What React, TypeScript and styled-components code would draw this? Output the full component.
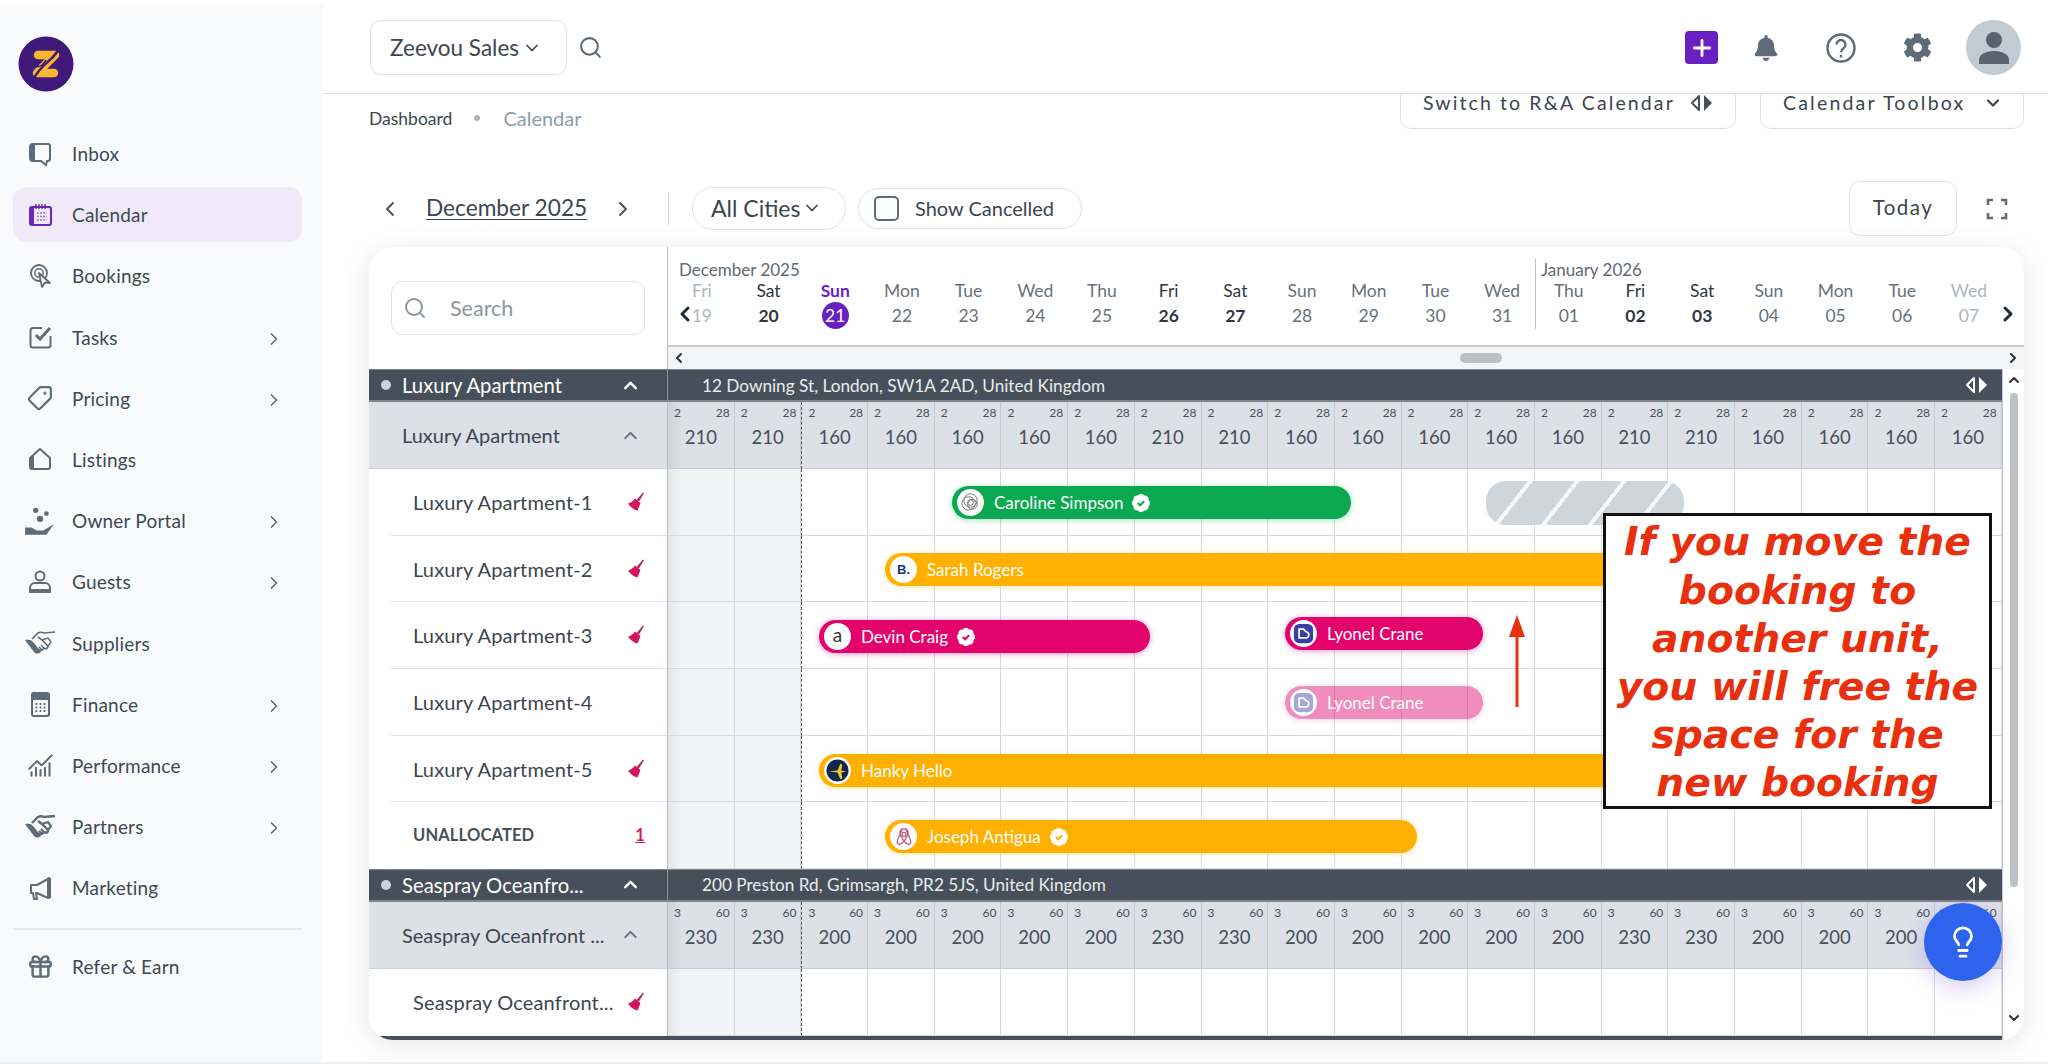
import React from 'react';
import styled, { createGlobalStyle } from 'styled-components';
import { Search, ChevronDown, ChevronUp, ChevronLeft, ChevronRight, Tag, ChartNoAxesCombined, Gift, Plus, Lightbulb } from 'lucide-react';
import { FaBell, FaCog } from 'react-icons/fa';

const FONT = `Lato, "Noto Sans", sans-serif`;
const COL = 1334 / 20;

const Global = createGlobalStyle`
  html, body { margin: 0; padding: 0; background: #fff; }
  body { font-family: ${FONT}; color: #3c4650; }
  * { box-sizing: border-box; }
`;

const Page = styled.div`
  width: 2048px; height: 1064px; display: flex; overflow: hidden; background: #fff;
  border-bottom: 2px solid #eceef0;
`;
const Sidebar = styled.aside`
  width: 323px; flex: none; margin-top: 4px; background: #f9fafb; padding: 32px 21px 0 13px;
  display: flex; flex-direction: column;
`;
const LogoWrap = styled.div`
  width: 56px; height: 56px; margin-left: 5px; margin-bottom: 34px;
`;
const NavList = styled.nav`
  display: flex; flex-direction: column;
`;
const NavItem = styled.div<{ $active?: boolean }>`
  height: 55px; margin-bottom: 6.2px; border-radius: 13px; display: flex; align-items: center;
  padding-left: 10px; padding-right: 18px; font-size: 19px; letter-spacing: .2px; color: #3f4954;
  background: ${p => (p.$active ? '#efe9f8' : 'transparent')};
`;
const NavIcon = styled.span<{ $active?: boolean }>`
  width: 34px; height: 34px; margin-right: 15px; display: flex; align-items: center; justify-content: center;
  color: ${p => (p.$active ? '#6a27b8' : '#5f6b76')};
`;
const NavLabel = styled.span`
  flex: 1;
`;
const NavChevron = styled.span`
  display: flex; color: #5f6b76; margin-top: 3px;
`;
const NavDivider = styled.div`
  height: 2px; background: #e7e9ec; margin: 7px 0 9px;
`;

const Main = styled.div`
  flex: 1; min-width: 0; display: flex; flex-direction: column;
`;
const TopBar = styled.header`
  height: 94px; flex: none; background: #fff; border-bottom: 1px solid #dfe2e5; position: relative; z-index: 3;
  display: flex; align-items: center; padding: 2px 27px 0 47px;
`;
const AccountSelect = styled.div`
  width: 197px; height: 55px; border: 1px solid #dfe3e7; border-radius: 11px; display: flex; align-items: center;
  padding-left: 19px; gap: 3px; font-size: 22.5px; color: #3c4650;
`;
const TopSearch = styled.span`
  display: flex; color: #5f6b76; margin-left: 11px;
`;
const TopRight = styled.div`
  margin-left: auto; display: flex; align-items: center;
`;
const PlusBtn = styled.div`
  width: 33px; height: 33px; border-radius: 4px; background: #6a1fc4; color: #fff; display: flex;
  align-items: center; justify-content: center; margin-right: 26px;
`;
const TopIcon = styled.span`
  width: 44px; display: flex; justify-content: center; color: #5f6b76; margin-right: 31px;
  &:nth-child(3) { margin-right: 32px; }
  &:nth-child(4) { margin-right: 27px; }
`;
const Avatar = styled.div`
  width: 55px; height: 55px; border-radius: 50%; background: #c2cad2; display: flex; align-items: center; justify-content: center;
`;

const Content = styled.main`
  flex: 1; min-height: 0; overflow: hidden; padding: 0 24px 0 46px; display: flex; flex-direction: column;
`;
const CrumbRow = styled.div`
  display: flex; align-items: flex-start; margin-top: -20px; height: 55px; flex: none;
`;
const Crumbs = styled.div`
  display: flex; align-items: center; margin-top: 32px; margin-right: auto; font-size: 17.5px; color: #3c4650;
`;
const CrumbDot = styled.span`
  width: 6px; height: 6px; border-radius: 50%; background: #a9b2bb; margin: 0 23px 0 22px;
`;
const CrumbMuted = styled.span`
  font-size: 20px; color: #929ca6;
`;
const TopAction = styled.div<{ $w: number; $track: number }>`
  width: ${p => p.$w}px; height: 55px; border: 1px solid #dfe3e7; border-radius: 11px; display: flex; align-items: center;
  justify-content: space-between; padding: 2px 20px 0 22px; font-size: 19.5px; line-height: 16px; letter-spacing: ${p => p.$track}px; color: #3c4650;
  margin-left: 24px;
`;
const Toolbar = styled.div`
  display: flex; align-items: center; height: 55px; flex: none; margin-top: 52px; padding-bottom: 0;
`;
const Arrow = styled.span`
  display: flex; color: #4a5560;
`;
const MonthLink = styled.span`
  font-size: 22.7px; color: #3c4650; text-decoration: underline; text-underline-offset: 3px; margin: 0 24px 2px 24px; width: 161px; text-decoration-thickness: 1px; white-space: nowrap;
`;
const VRule = styled.div`
  width: 1px; height: 33px; background: #cfd4d9; margin: 0 23px 0 33px;
`;
const Pill = styled.div<{ $w: number }>`
  height: 41px; width: ${p => p.$w}px; border: 1px solid #dfe3e7; border-radius: 21px; display: flex; align-items: center;
`;
const CityPill = styled(Pill)`
  padding: 0 0 2px 18px; gap: 2px; font-size: 23px; margin-right: 12px; height: 43px;
`;
const CancelPill = styled(Pill)`
  padding: 0 0 1px 15px; font-size: 20px;
`;
const Checkbox = styled.span`
  width: 25px; height: 25px; border: 2.5px solid #5f6b76; border-radius: 5px; margin-right: 16px;
`;
const TodayBtn = styled.div`
  margin-left: auto; width: 108px; height: 55px; border: 1px solid #dfe3e7; border-radius: 11px; display: flex;
  align-items: center; justify-content: center; font-size: 20.5px; letter-spacing: 1.5px; padding-bottom: 3px;
`;
const Expand = styled.span`
  display: flex; margin-left: 29px; margin-right: 16px; color: #5f6b76;
`;

const Card = styled.section`
  margin-top: 11px; height: 793px; flex: none; background: #fff; border-radius: 24px; overflow: hidden; position: relative;
  box-shadow: 0 4px 26px rgba(70, 80, 95, .14);
`;
const CardHead = styled.div`
  display: flex; height: 122px; position: relative;
`;
const HeadLeft = styled.div`
  width: 299px; flex: none; padding: 34px 0 0 22px; border-right: 1px solid #b9bec5;
`;
const SearchBox = styled.div`
  width: 254px; height: 54px; border: 1px solid #dfe3e7; border-radius: 11px; display: flex; align-items: center;
  padding-left: 11px; font-size: 21.5px; color: #8c96a0; gap: 23px;
`;
const HeadRight = styled.div`
  flex: 1; display: flex; flex-direction: column;
`;
const HeadDates = styled.div`
  height: 100px; padding-top: 12px; border-bottom: 2px solid #c8ccd1;
`;
const Grid20 = styled.div`
  display: grid; grid-template-columns: repeat(20, ${COL}px);
`;
const MonthLabel = styled.div<{ $from: number; $to: number; $rule?: boolean }>`
  grid-column: ${p => p.$from} / ${p => p.$to}; height: 21px; font-size: 17px; line-height: 21px; color: #5f6b76;
  padding-left: ${p => (p.$rule ? 5 : 11)}px;
  border-left: ${p => (p.$rule ? '1px solid #b9bec5' : 'none')};
`;
const DayCol = styled.div<{ $rule?: boolean }>`
  height: 49px; text-align: center; display: flex; flex-direction: column; align-items: center;
  border-left: ${p => (p.$rule ? '1px solid #b9bec5' : '1px solid transparent')};
`;
const DayName = styled.div<{ $tone: string }>`
  font-size: 17.5px; line-height: 22px;
  color: ${p => (p.$tone === 'today' ? '#6a1fc4' : p.$tone === 'bold' ? '#2f3842' : p.$tone === 'past' ? '#aeb6bd' : '#66717c')};
  font-weight: ${p => (p.$tone === 'today' ? 700 : 400)};
`;
const DayNum = styled.div<{ $tone: string }>`
  font-size: 17.5px; line-height: 27px; width: 27px; height: 27px; border-radius: 50%;
  color: ${p => (p.$tone === 'today' ? '#fff' : p.$tone === 'bold' ? '#2f3842' : p.$tone === 'past' ? '#aeb6bd' : '#66717c')};
  background: ${p => (p.$tone === 'today' ? '#6a1fc4' : 'transparent')};
  font-weight: ${p => (p.$tone === 'bold' ? 700 : 400)};
`;
const HeadNav = styled.span<{ $side: 'left' | 'right' }>`
  position: absolute; top: 55px; ${p => (p.$side === 'left' ? 'left: 304px;' : 'right: 4px;')} display: flex; color: #222a33;
`;
const HScroll = styled.div`
  height: 22px; background: #f4f5f7; display: flex; align-items: center; padding: 0 3px 0 3px; color: #333;
`;
const HThumb = styled.div`
  width: 42px; height: 10px; border-radius: 5px; background: #bdbfc2; margin-left: 773px; margin-right: auto;
`;
const Body = styled.div`
  display: flex; height: 671px; position: relative;
`;
const Rows = styled.div`
  flex: 1; display: flex; flex-direction: column;
`;
const VScroll = styled.div`
  width: 22px; flex: none; border-left: 1px solid #c4c8cd; display: flex; flex-direction: column; align-items: center; color: #333; background: #fff;
`;
const VThumb = styled.div`
  width: 8px; height: 494px; background: #bdbfc2; border-radius: 4px; margin: 5px 0 123px;
`;
const Row = styled.div<{ $h: number }>`
  display: flex; height: ${p => p.$h}px; flex: none;
`;
const DarkLeft = styled.div`
  width: 299px; flex: none; background: #47505a; color: #fff; border-right: 1px solid #8c939a; display: flex; align-items: center;
  padding-left: 12px; font-size: 20.3px; border-top: 1px solid #7f868d; border-bottom: 2px solid #7f868d;
`;
const DarkDot = styled.span`
  width: 10px; height: 10px; border-radius: 50%; background: #ccd2d8; margin-right: 11px; flex: none;
`;
const DarkName = styled.span`
  flex: 1; white-space: nowrap;
`;
const ChevronSlot = styled.span<{ $color: string }>`
  display: flex; width: 24px; justify-content: center; margin-right: 25px; color: ${p => p.$color};
`;
const DarkRight = styled.div`
  flex: 1; background: #47505a; color: #e9ecef; display: flex; align-items: center; justify-content: space-between;
  padding: 0 12px 0 34px; font-size: 17.2px; border-top: 1px solid #7f868d; border-bottom: 2px solid #7f868d;
`;
const SubLeft = styled.div`
  width: 299px; flex: none; background: #dde1e7; border-right: 1px solid #b9bec5; display: flex; align-items: center;
  padding-left: 33px; font-size: 20px; color: #3c4650; border-bottom: 1px solid #cfd3d8;
`;
const SubName = styled.span`
  flex: 1; white-space: nowrap;
`;
const PriceCell = styled.div<{ $today?: boolean; $first?: boolean }>`
  position: relative; background: #dde1e7; border-right: 1px solid #c6cbd1; border-bottom: 1px solid #c6cbd1; text-align: center;
  border-left: ${p => (p.$today ? '1px dashed #555' : 'none')};
  ${p => (p.$first ? 'background: linear-gradient(90deg, #cfd3d9, #dde1e7 14px);' : '')}
`;
const PriceMin = styled.div`
  display: flex; justify-content: space-between; padding: 3px 4px 0 6px; font-size: 12px; line-height: 15px; color: #47505a;
`;
const PriceVal = styled.div`
  font-size: 18.5px; line-height: 24px; margin-top: 5px; color: #47505a;
`;
const UnitLeft = styled.div`
  width: 299px; flex: none; border-right: 1px solid #b9bec5; padding-left: 22px; background: #fff; display: flex;
`;
const UnitInner = styled.div<{ $last?: boolean }>`
  flex: 1; display: flex; align-items: center; padding-left: 22px; padding-right: 22px; font-size: 20px; letter-spacing: .15px; color: #3c4650;
  border-bottom: 1px solid ${p => (p.$last ? 'transparent' : '#dfe2e5')};
`;
const UnitName = styled.span`
  flex: 1; white-space: nowrap;
`;
const Unallocated = styled.span`
  flex: 1; font-size: 16.5px; font-weight: 700; color: #47505a;
`;
const UnallocatedCount = styled.span`
  color: #d81b60; font-size: 16.5px; text-decoration: underline; font-weight: 700;
`;
const BroomSlot = styled.span`
  display: flex;
`;
const Timeline = styled.div`
  flex: 1; position: relative; display: grid; grid-template-columns: repeat(20, ${COL}px);
`;
const Cell = styled.div<{ $past?: boolean; $today?: boolean; $first?: boolean }>`
  border-right: 1px solid #d6dade; border-bottom: 1px solid #d6dade;
  background: ${p => (p.$first ? 'linear-gradient(90deg, #e4e6ea, #f3f4f6 14px)' : p.$past ? '#f3f4f6' : '#fff')};
  border-left: ${p => (p.$today ? '1px dashed #555' : 'none')};
`;
const Bar = styled.div<{ $color: string; $glow: string; $faded?: boolean }>`
  position: absolute; height: 33px; border-radius: 17px; background: ${p => p.$color}; display: flex; align-items: center;
  padding-left: 5px; color: #fff; font-size: 17px; white-space: nowrap; box-shadow: 0 1px 6px ${p => p.$glow};
  opacity: ${p => (p.$faded ? 0.45 : 1)};
`;
const BarLogo = styled.span`
  width: 27px; height: 27px; border-radius: 50%; background: #fff; display: flex; align-items: center; justify-content: center;
  margin-right: 10px; flex: none; overflow: hidden;
`;
const BLetter = styled.span`
  font-family: "Liberation Sans", sans-serif; font-size: 13px; font-weight: 700; color: #123a75;
`;
const ALetter = styled.span`
  font-size: 19px; color: #333; line-height: 20px; margin-top: -4px;
`;
const BarBadge = styled.span`
  display: flex; margin-left: 7px;
`;
const Striped = styled.div`
  position: absolute; height: 44px; border-radius: 20px;
  background: repeating-linear-gradient(128deg, #ced5db 0 33px, #f6f7f8 33px 37px);
`;
const BottomStrip = styled.div`
  height: 4px; flex: none; background: #47505a;
`;
const UpArrowWrap = styled.div`
  position: absolute; left: 1140px; top: 246px; display: flex; z-index: 2;
`;
const Note = styled.div`
  position: absolute; left: 1234px; top: 144px; width: 389px; height: 296px; background: #fff; border: 3px solid #111; z-index: 2;
  display: flex; align-items: center; justify-content: center; text-align: center; padding-top: 4px;
  font-family: "DejaVu Sans", sans-serif; font-weight: 700; font-style: italic; font-size: 39.3px; line-height: 48.2px; color: #e8300f;
`;
const Fab = styled.div`
  position: absolute; left: 1555px; top: 534px; width: 78px; height: 78px; border-radius: 50%; background: #2d63ed; color: #fff; z-index: 4;
  display: flex; align-items: center; justify-content: center; box-shadow: 0 6px 24px rgba(120, 80, 230, .3);
`;

const G = '#5f6b76';
const Ico = { width: 30, height: 30, viewBox: '0 0 30 30', fill: 'none' } as const;
const InboxIcon = () => (
  <svg {...Ico}><path d="M8 5h15a2 2 0 0 1 2 2v13a2 2 0 0 1-2 2h-1l-1 4-5-4H8a3 3 0 0 1-3-3V8a3 3 0 0 1 3-3z" stroke={G} strokeWidth="2" /><path d="M5 8a3 3 0 0 1 3-3h2v17H8a3 3 0 0 1-3-3z" fill={G} /></svg>
);
const CalendarIcon = () => (
  <svg {...Ico}><rect x="5" y="7" width="21" height="18" rx="2" stroke="#6a27b8" strokeWidth="2" /><path d="M5 9a2 2 0 0 1 2-2h2v18H7a2 2 0 0 1-2-2z" fill="#6a27b8" /><path d="M11 4v5M14 4v5M17 4v5M20 4v5M9 7h16" stroke="#6a27b8" strokeWidth="1.4" /><path d="M12 13h10M12 16.5h10M12 20h10" stroke="#8d63c9" strokeWidth="1.6" strokeDasharray="1.6 1.6" /></svg>
);
const BookingsIcon = () => (
  <svg {...Ico}><circle cx="14" cy="12" r="8" stroke={G} strokeWidth="1.8" /><circle cx="14" cy="12" r="4.2" stroke={G} strokeWidth="1.5" /><path d="M14 12l3 14 3-4.500 5 .5z" fill="#f9fafb" stroke={G} strokeWidth="1.8" strokeLinejoin="round" /></svg>
);
const TasksIcon = () => (
  <svg {...Ico}><path d="M17 6H8a2.500 2.500 0 0 0-2.500 2.500V23A2.500 2.500 0 0 0 8 25.500h15a2.500 2.500 0 0 0 2.500-2.500v-9" stroke={G} strokeWidth="2" /><path d="M11 13l4 4 10-11" stroke={G} strokeWidth="3" /></svg>
);
const ListingsIcon = () => (
  <svg {...Ico}><path d="M15 5L5 14v9a2 2 0 0 0 2 2h16a2 2 0 0 0 2-2v-9z" stroke={G} strokeWidth="2" strokeLinejoin="round" /><path d="M5 14v9a2 2 0 0 0 2 2h2V11z" fill={G} /></svg>
);
const OwnerIcon = () => (
  <svg {...Ico} width={32} height={32}><circle cx="11" cy="5" r="2.500" fill={G} /><circle cx="21" cy="8" r="2.200" fill={G} /><circle cx="15" cy="13" r="3" fill={G} /><path d="M1 21h6l5 3h6l10-6-7 10H1z" fill={G} /></svg>
);
const GuestsIcon = () => (
  <svg {...Ico}><circle cx="15" cy="9" r="4.500" stroke={G} strokeWidth="2" /><path d="M5 25v-4a5 5 0 0 1 5-5h10a5 5 0 0 1 5 5v4z" stroke={G} strokeWidth="2" /><path d="M5 25v-3h20v3z" fill={G} /></svg>
);
const ShakeIcon = ({ heavy }: { heavy?: boolean }) => (
  <svg width="32" height="28" viewBox="0 0 32 28" fill="none">
    <path d="M1 11c4-1 7 0 9 3l7 9c-3 2-5 2-7 0z" fill={G} />
    <path d="M8 10l6-6c2-1 4-1 6 0l11-1" stroke={G} strokeWidth={heavy ? 2.4 : 1.6} />
    <path d="M14 8l4 3 5 5c2 2 0 5-3 3l-2 2c-2 1-3 0-4-1" stroke={G} strokeWidth={heavy ? 2.4 : 1.6} />
    <path d="M18 11l6-2 3 4-3 4M20 19l-3-3M18 21l-3-3" stroke={G} strokeWidth={heavy ? 2.2 : 1.4} />
  </svg>
);
const FinanceIcon = () => (
  <svg {...Ico}><rect x="7" y="4" width="17" height="23" rx="2" stroke={G} strokeWidth="2" /><path d="M7 6a2 2 0 0 1 2-2h13a2 2 0 0 1 2 2v5H7z" fill={G} /><path d="M10.500 15h10M10.500 18.500h10M10.500 22h10" stroke={G} strokeWidth="1.800" strokeDasharray="1.800 2.300" /></svg>
);
const MarketingIcon = () => (
  <svg {...Ico}><path d="M23 6L12 12H6v8h2l1 6h3l-1-6h1l11 5" stroke={G} strokeWidth="2" strokeLinejoin="round" /><path d="M22 6a2 2 0 0 1 2-2 2 2 0 0 1 2 2v18a2 2 0 0 1-2 2 2 2 0 0 1-2-2z" fill={G} /></svg>
);
const LogoIcon = () => (
  <svg width="56" height="56" viewBox="0 0 56 56" fill="none"><circle cx="28" cy="28" r="27.500" fill="#3f1a78" /><path d="M20 19H37L19 37H36" stroke="#f9b62e" strokeWidth="8.500" strokeLinejoin="round" strokeLinecap="round" /><path d="M41 12C37 24 24 26 15 44" stroke="#3f1a78" strokeWidth="2.400" /><path d="M16 30c6 2 10-2 12-6" stroke="#3f1a78" strokeWidth="1.600" /></svg>
);
const BroomIcon = () => (
  <svg width="20" height="22" viewBox="0 0 20 22"><path d="M11.500 9L18 1.500l1 .8L14 10.500z" fill="#a8305f" /><path d="M10 7.500l5.500 4.500-3 7.500c-3-.5-7-3-9.500-7 2-.2 5-2 7-5z" fill="#d5145f" /></svg>
);
const DoubleTri = ({ color }: { color: string }) => (
  <svg width="26" height="18" viewBox="0 0 26 18"><path d="M10 2L3 9l7 7z" fill="none" stroke={color} strokeWidth="2" strokeLinejoin="round" /><path d="M15 1l8 8-8 8z" fill={color} /></svg>
);
const VerifiedBadge = ({ color }: { color: string }) => (
  <svg width="22" height="22" viewBox="0 0 24 24"><path d="M3.850 8.620a4 4 0 0 1 4.780-4.770 4 4 0 0 1 6.740 0 4 4 0 0 1 4.780 4.780 4 4 0 0 1 0 6.740 4 4 0 0 1-4.770 4.780 4 4 0 0 1-6.750 0 4 4 0 0 1-4.780-4.770 4 4 0 0 1 0-6.760Z" fill="#fff" /><path d="m8.500 12 2.500 2.500 4.500-4.500" stroke={color} strokeWidth="2.200" fill="none" /></svg>
);
const RingsLogo = () => (
  <svg width="23" height="23" viewBox="0 0 24 24" fill="none" stroke="#777" strokeWidth="1"><circle cx="12" cy="10" r="7" /><circle cx="10" cy="13" r="7" /><circle cx="14" cy="14" r="5" /><circle cx="12" cy="12" r="3" /></svg>
);
const PlaneLogo = () => (
  <svg width="23" height="23" viewBox="0 0 24 24"><circle cx="12" cy="12" r="11.500" fill="#10294a" /><path d="M3 13l9-1 3-7 2 1-1 6 5 1-5 1 1 6-2 1-3-7z" fill="#f5c33b" /></svg>
);
const AirLogo = () => (
  <svg width="20" height="22" viewBox="0 0 24 24" fill="none" stroke="#c0577a" strokeWidth="1.500"><path d="M12 17c-3-4-5-8-5-10a5 5 0 0 1 10 0c0 2-2 6-5 10zM12 17c3 4 7 5 8 2s-3-10-6-16M12 17c-3 4-7 5-8 2s3-10 6-16" /><circle cx="12" cy="9" r="2.500" /></svg>
);
const LodgeLogo = () => (
  <svg width="21" height="21" viewBox="0 0 24 24"><rect x="1" y="1" width="22" height="22" rx="6" fill="#3a3fa8" /><path d="M7 7v10h7a3.500 3.500 0 0 0 1-7l-3-3z" fill="none" stroke="#fff" strokeWidth="2" /></svg>
);
const ExpandIcon = () => (
  <svg width="22" height="22" viewBox="0 0 22 22" fill="none" stroke="#5f6b76" strokeWidth="2.600"><path d="M2 7V2h5M15 2h5v5M20 15v5h-5M7 20H2v-5" /></svg>
);
const PersonIcon = () => (
  <svg width="34" height="36" viewBox="0 0 34 36" fill="#58636e"><circle cx="17" cy="10" r="8" /><path d="M2 34v-4c0-6 8-9 15-9s15 3 15 9v4z" /></svg>
);
const HelpIcon = () => (
  <svg width="32" height="32" viewBox="0 0 32 32" fill="none" stroke="#5f6b76" strokeWidth="2.400"><circle cx="16" cy="16" r="13.500" /><path d="M11.500 12.500a4.500 4.500 0 1 1 7 3.800c-1.700 1.100-2.500 1.900-2.500 4" /><path d="M16 23v2.500" /></svg>
);
const RedArrow = () => (
  <svg width="16" height="92" viewBox="0 0 16 92"><path d="M8 0l8 22H9.500v70h-3V22H0z" fill="#e8300f" /></svg>
);

const nav: { label: string; icon: React.ReactNode; more?: boolean; active?: boolean }[] = [
  { label: 'Inbox', icon: <InboxIcon /> },
  { label: 'Calendar', icon: <CalendarIcon />, active: true },
  { label: 'Bookings', icon: <BookingsIcon /> },
  { label: 'Tasks', icon: <TasksIcon />, more: true },
  { label: 'Pricing', icon: <Tag size={26} strokeWidth={2} style={{ transform: 'scaleX(-1)' }} />, more: true },
  { label: 'Listings', icon: <ListingsIcon /> },
  { label: 'Owner Portal', icon: <OwnerIcon />, more: true },
  { label: 'Guests', icon: <GuestsIcon />, more: true },
  { label: 'Suppliers', icon: <ShakeIcon /> },
  { label: 'Finance', icon: <FinanceIcon />, more: true },
  { label: 'Performance', icon: <ChartNoAxesCombined size={27} strokeWidth={1.8} />, more: true },
  { label: 'Partners', icon: <ShakeIcon heavy />, more: true },
  { label: 'Marketing', icon: <MarketingIcon /> },
];

const names = ['Fri','Sat','Sun','Mon','Tue','Wed','Thu','Fri','Sat','Sun','Mon','Tue','Wed','Thu','Fri','Sat','Sun','Mon','Tue','Wed'];
const nums = ['19','20','21','22','23','24','25','26','27','28','29','30','31','01','02','03','04','05','06','07'];
const high = new Set([0, 1, 7, 8, 14, 15]);
const bold = new Set([1, 7, 8, 14, 15]);
const tone = (i: number) => (i === 2 ? 'today' : i === 0 || i === 19 ? 'past' : bold.has(i) ? 'bold' : 'norm');
const idx = Array.from({ length: 20 }, (_, i) => i);

const Prices = ({ lo, max, hi, reg }: { lo: string; max: string; hi: number; reg: number }) => (
  <Timeline>
    {idx.map(i => (
      <PriceCell key={i} $today={i === 2} $first={i === 0}>
        <PriceMin><span>{lo}</span><span>{max}</span></PriceMin>
        <PriceVal>{high.has(i) ? hi : reg}</PriceVal>
      </PriceCell>
    ))}
  </Timeline>
);
const Cells = () => (
  <>{idx.map(i => <Cell key={i} $past={i < 2} $first={i === 0} $today={i === 2} />)}</>
);

const C = { green: ['#0aa84f', 'rgba(10,168,79,.35)'], amber: ['#ffb000', 'rgba(255,176,0,.3)'], pink: ['#e2046c', 'rgba(226,4,108,.4)'] };

const units = [
  { name: 'Luxury Apartment-1', broom: true },
  { name: 'Luxury Apartment-2', broom: true },
  { name: 'Luxury Apartment-3', broom: true },
  { name: 'Luxury Apartment-4' },
  { name: 'Luxury Apartment-5', broom: true },
];

const B = ({ left, width, top = 17, color, logo, name, badge, faded }: { left: number; width: number; top?: number; color: string[]; logo: React.ReactNode; name: string; badge?: boolean; faded?: boolean }) => (
  <Bar $color={color[0]} $glow={color[1]} $faded={faded} style={{ left, width, top }}>
    <BarLogo>{logo}</BarLogo>
    {name}
    {badge && <BarBadge><VerifiedBadge color={color[0]} /></BarBadge>}
  </Bar>
);

const overlays: React.ReactNode[] = [
  <>
    <B left={284} width={399} color={C.green} logo={<RingsLogo />} name="Caroline Simpson" badge />
    <Striped style={{ left: 818, width: 198, top: 12 }} />
  </>,
  <B left={217} width={800} color={C.amber} logo={<BLetter>B.</BLetter>} name="Sarah Rogers" />,
  <>
    <B left={151} width={331} top={18} color={C.pink} logo={<ALetter>a</ALetter>} name="Devin Craig" badge />
    <B left={617} width={198} top={15} color={C.pink} logo={<LodgeLogo />} name="Lyonel Crane" />
  </>,
  <B left={617} width={198} top={17} color={C.pink} logo={<LodgeLogo />} name="Lyonel Crane" faded />,
  <B left={151} width={860} top={18} color={C.amber} logo={<PlaneLogo />} name="Hanky Hello" />,
];

export default function App() {
  return (
    <Page>
      <Global />
      <Sidebar>
        <LogoWrap><LogoIcon /></LogoWrap>
        <NavList>
          {nav.map(n => (
            <NavItem key={n.label} $active={n.active}>
              <NavIcon $active={n.active}>{n.icon}</NavIcon>
              <NavLabel>{n.label}</NavLabel>
              {n.more && <NavChevron><ChevronRight size={20} /></NavChevron>}
            </NavItem>
          ))}
          <NavDivider />
          <NavItem>
            <NavIcon><Gift size={27} strokeWidth={2.2} /></NavIcon>
            <NavLabel>Refer &amp; Earn</NavLabel>
          </NavItem>
        </NavList>
      </Sidebar>
      <Main>
        <TopBar>
          <AccountSelect>Zeevou Sales <ChevronDown size={20} /></AccountSelect>
          <TopSearch><Search size={25} strokeWidth={2} /></TopSearch>
          <TopRight>
            <PlusBtn><Plus size={26} strokeWidth={2.6} /></PlusBtn>
            <TopIcon><FaBell size={26} /></TopIcon>
            <TopIcon><HelpIcon /></TopIcon>
            <TopIcon><FaCog size={29} /></TopIcon>
            <Avatar><PersonIcon /></Avatar>
          </TopRight>
        </TopBar>
        <Content>
          <CrumbRow>
            <Crumbs>Dashboard<CrumbDot /><CrumbMuted>Calendar</CrumbMuted></Crumbs>
            <TopAction $w={336} $track={2.1}>Switch to R&amp;A Calendar <DoubleTri color="#47505a" /></TopAction>
            <TopAction $w={264} $track={2.2}>Calendar Toolbox <ChevronDown size={20} strokeWidth={2.6} /></TopAction>
          </CrumbRow>
          <Toolbar>
            <Arrow style={{ marginLeft: 9 }}><ChevronLeft size={24} /></Arrow>
            <MonthLink>December 2025</MonthLink>
            <Arrow><ChevronRight size={24} /></Arrow>
            <VRule />
            <CityPill $w={154}>All Cities <ChevronDown size={20} /></CityPill>
            <CancelPill $w={224}><Checkbox />Show Cancelled</CancelPill>
            <TodayBtn>Today</TodayBtn>
            <Expand><ExpandIcon /></Expand>
          </Toolbar>
          <Card>
            <CardHead>
              <HeadLeft>
                <SearchBox><Search size={24} color="#8c96a0" />Search</SearchBox>
              </HeadLeft>
              <HeadRight>
                <HeadDates>
                  <Grid20>
                    <MonthLabel $from={1} $to={14}>December 2025</MonthLabel>
                    <MonthLabel $from={14} $to={21} $rule>January 2026</MonthLabel>
                  </Grid20>
                  <Grid20>
                    {idx.map(i => (
                      <DayCol key={i} $rule={i === 13}>
                        <DayName $tone={tone(i)}>{names[i]}</DayName>
                        <DayNum $tone={tone(i)}>{nums[i]}</DayNum>
                      </DayCol>
                    ))}
                  </Grid20>
                </HeadDates>
                <HScroll>
                  <ChevronLeft size={16} strokeWidth={3} />
                  <HThumb />
                  <ChevronRight size={16} strokeWidth={3} />
                </HScroll>
              </HeadRight>
              <HeadNav $side="left"><ChevronLeft size={24} strokeWidth={3} /></HeadNav>
              <HeadNav $side="right"><ChevronRight size={24} strokeWidth={3} /></HeadNav>
            </CardHead>
            <Body>
              <Rows>
                <Row $h={33}>
                  <DarkLeft><DarkDot /><DarkName>Luxury Apartment</DarkName><ChevronSlot $color="#fff"><ChevronUp size={21} strokeWidth={2.8} /></ChevronSlot></DarkLeft>
                  <DarkRight>12 Downing St, London, SW1A 2AD, United Kingdom<DoubleTri color="#fff" /></DarkRight>
                </Row>
                <Row $h={67}>
                  <SubLeft><SubName>Luxury Apartment</SubName><ChevronSlot $color="#66717c"><ChevronUp size={21} strokeWidth={2.4} /></ChevronSlot></SubLeft>
                  <Prices lo="2" max="28" hi={210} reg={160} />
                </Row>
                {units.map((u, i) => (
                  <Row key={u.name} $h={66.7}>
                    <UnitLeft>
                      <UnitInner>
                        <UnitName>{u.name}</UnitName>
                        {u.broom && <BroomSlot><BroomIcon /></BroomSlot>}
                      </UnitInner>
                    </UnitLeft>
                    <Timeline><Cells />{overlays[i]}</Timeline>
                  </Row>
                ))}
                <Row $h={66.5}>
                  <UnitLeft>
                    <UnitInner $last>
                      <Unallocated>UNALLOCATED</Unallocated>
                      <UnallocatedCount>1</UnallocatedCount>
                    </UnitInner>
                  </UnitLeft>
                  <Timeline><Cells /><B left={217} width={532} top={18} color={C.amber} logo={<AirLogo />} name="Joseph Antigua" badge /></Timeline>
                </Row>
                <Row $h={33}>
                  <DarkLeft><DarkDot /><DarkName>Seaspray Oceanfro...</DarkName><ChevronSlot $color="#fff"><ChevronUp size={21} strokeWidth={2.8} /></ChevronSlot></DarkLeft>
                  <DarkRight>200 Preston Rd, Grimsargh, PR2 5JS, United Kingdom<DoubleTri color="#fff" /></DarkRight>
                </Row>
                <Row $h={67}>
                  <SubLeft><SubName>Seaspray Oceanfront ...</SubName><ChevronSlot $color="#66717c"><ChevronUp size={21} strokeWidth={2.4} /></ChevronSlot></SubLeft>
                  <Prices lo="3" max="60" hi={230} reg={200} />
                </Row>
                <Row $h={67}>
                  <UnitLeft>
                    <UnitInner $last>
                      <UnitName>Seaspray Oceanfront...</UnitName>
                      <BroomSlot><BroomIcon /></BroomSlot>
                    </UnitInner>
                  </UnitLeft>
                  <Timeline><Cells /></Timeline>
                </Row>
                <BottomStrip />
              </Rows>
              <VScroll>
                <ChevronUp size={16} strokeWidth={3} style={{ marginTop: 3 }} />
                <VThumb />
                <ChevronDown size={16} strokeWidth={3} />
              </VScroll>
              <UpArrowWrap><RedArrow /></UpArrowWrap>
              <Note>
                <div>If you move the<br />booking to<br />another unit,<br />you will free the<br />space for the<br />new booking</div>
              </Note>
              <Fab><Lightbulb size={34} strokeWidth={2} /></Fab>
            </Body>
          </Card>
        </Content>
      </Main>
    </Page>
  );
}
